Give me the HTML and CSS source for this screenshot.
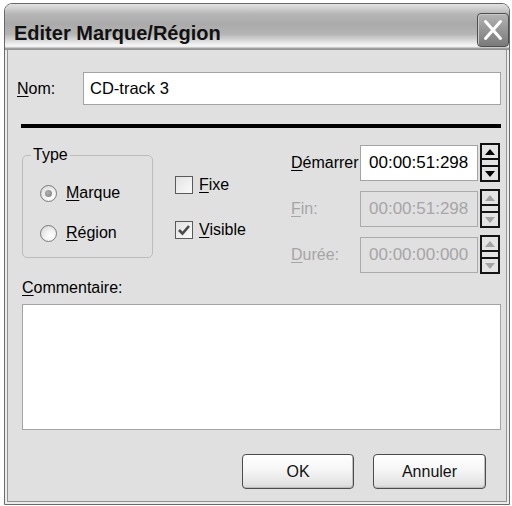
FILE: index.html
```html
<!DOCTYPE html>
<html lang="fr">
<head>
<meta charset="utf-8">
<title>Editer Marque/Région</title>
<link rel="stylesheet" href="styles.css">
</head>
<body>
<div class="window">
  <div class="titlebar">
    <span class="title">Editer Marque/Région</span>
    <span class="close">
      <svg width="30" height="32" viewBox="0 0 30 32"><path d="M7.5 7.5 L22.5 24.5 M22.5 7.5 L7.5 24.5" stroke="#fff" stroke-width="3" stroke-linecap="round" fill="none"/></svg>
    </span>
  </div>
  <div class="client">
    <div class="name-row">
      <span class="lbl name-lbl"><u>N</u>om:</span>
      <div class="field name-field">CD-track 3</div>
    </div>
    <div class="sep"></div>
    <div class="middle">
      <fieldset class="type">
        <legend>Type</legend>
        <div class="opt"><span class="radio checked"></span><span class="lbl"><u>M</u>arque</span></div>
        <div class="opt"><span class="radio"></span><span class="lbl"><u>R</u>égion</span></div>
      </fieldset>
      <div class="checks">
        <div class="opt"><span class="check"></span><span class="lbl"><u>F</u>ixe</span></div>
        <div class="opt"><span class="check"><svg width="16" height="16" viewBox="0 0 16 16"><path d="M3 8 L6.5 11.5 L13 4" stroke="#4a4a4a" stroke-width="2.6" fill="none"/></svg></span><span class="lbl"><u>V</u>isible</span></div>
      </div>
      <div class="times">
        <span class="lbl tl"><u>D</u>émarrer</span>
        <div class="field tf">00:00:51:298</div>
        <div class="spin"><div class="sb"><span class="up"></span></div><div class="sg"></div><div class="sb"><span class="dn"></span></div></div>

        <span class="lbl tl dis"><u>F</u>in:</span>
        <div class="field tf dis">00:00:51:298</div>
        <div class="spin dis"><div class="sb"><span class="up"></span></div><div class="sg"></div><div class="sb"><span class="dn"></span></div></div>

        <span class="lbl tl dis"><u>D</u>urée:</span>
        <div class="field tf dis">00:00:00:000</div>
        <div class="spin dis"><div class="sb"><span class="up"></span></div><div class="sg"></div><div class="sb"><span class="dn"></span></div></div>
      </div>
    </div>
    <div class="lbl comment-lbl"><u>C</u>ommentaire:</div>
    <div class="field memo"></div>
    <div class="buttons">
      <button class="btn ok">OK</button>
      <button class="btn cancel">Annuler</button>
    </div>
  </div>
</div>
</body>
</html>
```

FILE: styles.css
```css
html, body {
  margin: 0;
  padding: 0;
  background: #ffffff;
}
body {
  font-family: "Liberation Sans", Arial, sans-serif;
  font-size: 16px;
  color: #000;
}
.window {
  box-sizing: border-box;
  width: 506px;
  height: 502px;
  margin: 3px 0 0 4px;
  border: 1px solid #6a6a6a;
  border-radius: 8px 8px 0 0;
  overflow: hidden;
  background: #ececec;
  display: flex;
  flex-direction: column;
}
.titlebar {
  height: 46px;
  flex: none;
  display: flex;
  align-items: flex-start;
  justify-content: space-between;
  background: linear-gradient(to bottom,
    #e2e2e2 0px, #d6d6d6 3px, #b6b6b6 10px, #aaaaaa 20px,
    #b4b4b4 30px, #dcdcdc 37px, #f4f4f4 41px, #eeeeee 43px,
    #a6a6a6 44px, #8e8e8e 46px);
}
.title {
  font-weight: bold;
  font-size: 20px;
  line-height: 24px;
  margin: 17px 0 0 9px;
  color: #111;
}
.close {
  box-sizing: border-box;
  width: 32px;
  height: 34px;
  margin: 9px 0 0 0;
  border: 1px solid #4e4e4e;
  border-radius: 4px;
  background: linear-gradient(to bottom, #b4b4b4, #939393 55%, #7a7a7a);
  box-shadow: inset 1px 1px 0 #cacaca;
  display: flex;
  align-items: center;
  justify-content: center;
}
.close svg { display: block; }
.client {
  flex: 1;
  margin: 0 2px 2px 2px;
  border: 1px solid #929292;
  border-top: none;
  background: #e0e0e0;
  padding: 0 5px 0 9px;
  display: flex;
  flex-direction: column;
}
.lbl { line-height: 18px; white-space: nowrap; }
u { text-underline-offset: 2px; }
.field {
  box-sizing: border-box;
  background: #fff;
  border: 1px solid #a4a4a4;
  display: flex;
  align-items: center;
}
.name-row {
  margin-top: 22px;
  display: flex;
  align-items: center;
}
.name-lbl { width: 66px; flex: none; }
.name-field {
  flex: 1;
  height: 33px;
  padding-left: 6px;
  font-size: 16.5px;
}
.sep {
  margin: 19px 0 0 4px;
  height: 4px;
  background: #000;
}
.middle {
  margin-top: 15px;
  display: flex;
  align-items: flex-start;
}
.type {
  margin: 3px 0 0 5px;
  width: 131px;
  box-sizing: border-box;
  border: 1px solid #bcbcbc;
  border-radius: 5px;
  padding: 17px 0 12px 17px;
  min-inline-size: 0;
}
.type legend {
  padding: 0 2px;
  margin-left: -9px;
  line-height: 18px;
}
.opt {
  display: flex;
  align-items: center;
  height: 24px;
}
.type .opt + .opt { margin-top: 16px; }
.radio {
  box-sizing: border-box;
  width: 17px;
  height: 17px;
  border-radius: 50%;
  border: 1px solid #7a7a7a;
  background: radial-gradient(circle at 65% 70%, #ffffff 0, #f2f2f2 40%, #d0d0d0 100%);
  margin-right: 9px;
  display: flex;
  align-items: center;
  justify-content: center;
}
.radio.checked::after {
  content: "";
  width: 7px;
  height: 7px;
  border-radius: 50%;
  background: radial-gradient(circle at 40% 40%, #b0b0b0, #7c7c7c);
}
.checks {
  margin: 30px 0 0 22px;
  display: flex;
  flex-direction: column;
  gap: 21px;
}
.check {
  box-sizing: border-box;
  width: 18px;
  height: 18px;
  border: 1px solid #5a5a5a;
  background: linear-gradient(135deg, #e2e2e2, #fafafa);
  margin-right: 6px;
  display: flex;
  align-items: center;
  justify-content: center;
}
.check svg { display: block; }
.times {
  margin: 0 3px 0 auto;
  display: grid;
  grid-template-columns: 68px 118px 20px;
  column-gap: 0;
  row-gap: 7px;
  align-items: center;
}
.tl { margin-left: -1px; }
.tf {
  height: 36px;
  padding-left: 8px;
  font-size: 17px;
}
.tf.dis {
  background: #e0e0e0;
  border-color: #ababab;
}
.dis { color: #a6a6a6; }
.spin {
  box-sizing: border-box;
  width: 20px;
  height: 39px;
  margin-left: 2px;
  border: 2px solid #111;
  display: flex;
  flex-direction: column;
  background: #e4e4e4;
}
.sb {
  flex: 1;
  display: flex;
  align-items: center;
  justify-content: center;
}
.sg {
  height: 5px;
  border-top: 2px solid #111;
  border-bottom: 2px solid #111;
}
.up, .dn {
  width: 0;
  height: 0;
  border-left: 5px solid transparent;
  border-right: 5px solid transparent;
}
.up { border-bottom: 6px solid #000; }
.dn { border-top: 6px solid #000; }
.spin.dis { border-color: #151515; }
.spin.dis .sg { border-top-color: #151515; border-bottom-color: #151515; }
.spin.dis .up { border-bottom-color: #a4a4a4; }
.spin.dis .dn { border-top-color: #a4a4a4; }
.comment-lbl {
  margin: 5px 0 0 5px;
}
.memo {
  margin: 7px 0 0 5px;
  height: 126px;
}
.buttons {
  margin: 24px 15px 0 0;
  display: flex;
  justify-content: flex-end;
  gap: 19px;
}
.btn {
  box-sizing: border-box;
  height: 35px;
  border: 1px solid #4c4c4c;
  border-radius: 4px;
  background: linear-gradient(to bottom, #ffffff 0%, #f6f6f6 45%, #e2e2e2 90%, #d0d0d0 100%);
  box-shadow: inset -1px -1px 0 #bdbdbd;
  font-family: "Liberation Sans", Arial, sans-serif;
  font-size: 16px;
  color: #111;
  padding: 0;
}
.ok { width: 112px; }
.cancel { width: 113px; }
```
